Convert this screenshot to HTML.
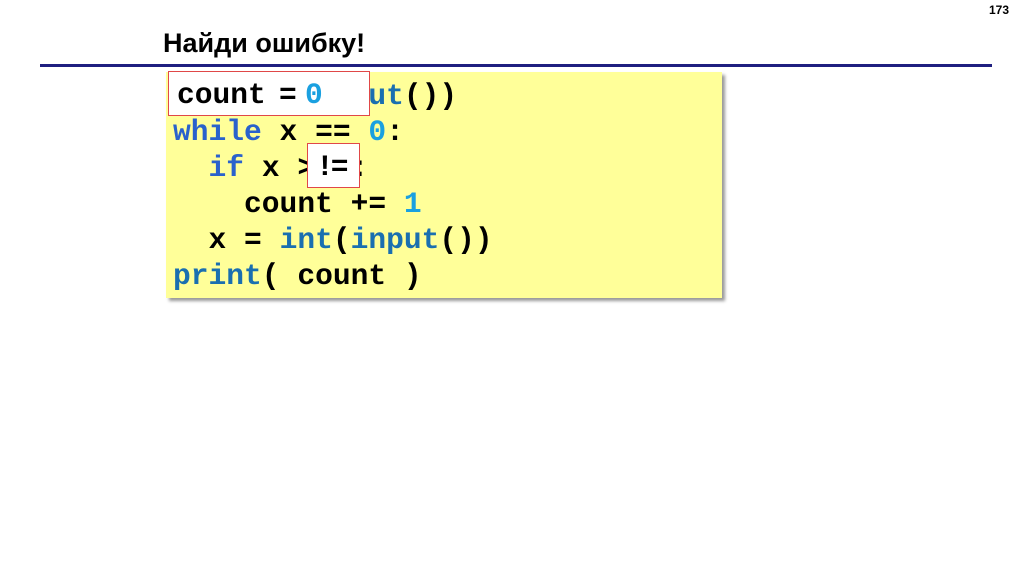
<!DOCTYPE html>
<html><head><meta charset="utf-8"><style>
body{margin:0;width:1024px;height:574px;background:#fff;position:relative;overflow:hidden;font-family:"Liberation Sans",sans-serif}
.num{position:absolute;left:989px;top:3px;font-size:12px;font-weight:bold}
.title{position:absolute;left:163px;top:28px;font-size:27px;font-weight:bold;color:#000}
.line{position:absolute;left:40px;top:64px;width:952px;height:3px;background:#1f1f80}
.code{position:absolute;left:166px;top:72px;width:556px;height:226px;background:#ffff99;box-shadow:3px 3px 3px #999}
pre{position:absolute;left:173px;top:78px;margin:0;font-family:"Liberation Mono",monospace;font-weight:bold;font-size:29.6px;line-height:36px;color:#000}
.k{color:#2a62cc}.n{color:#1aa0e0}.f{color:#1a6fb0}
.box{position:absolute;background:#fff;border:1px solid #e04848;box-sizing:border-box}
.bt{position:absolute;font-family:"Liberation Mono",monospace;font-weight:bold;font-size:29.6px;line-height:36px}
</style></head><body>
<div class="num">173</div>
<div class="title">Найди ошибку!</div>
<div class="line"></div>
<div class="code"></div>
<pre>x = <span class="f">int</span>(<span class="f">input</span>())
<span class="k">while</span> x == <span class="n">0</span>:
  <span class="k">if</span> x &gt; <span class="n">0</span>:
    count += <span class="n">1</span>
  x = <span class="f">int</span>(<span class="f">input</span>())
<span class="f">print</span>( count )</pre>
<div class="box" style="left:168px;top:71px;width:202px;height:45px"></div>
<div class="bt" style="left:177px;top:77px">count</div>
<div class="bt" style="left:279px;top:77px">=</div>
<div class="bt" style="left:305px;top:77px;color:#1aa0e0">0</div>
<div class="box" style="left:307px;top:143px;width:53px;height:45px"></div>
<div class="bt" style="left:316px;top:149px;letter-spacing:-3px">!=</div>
</body></html>
